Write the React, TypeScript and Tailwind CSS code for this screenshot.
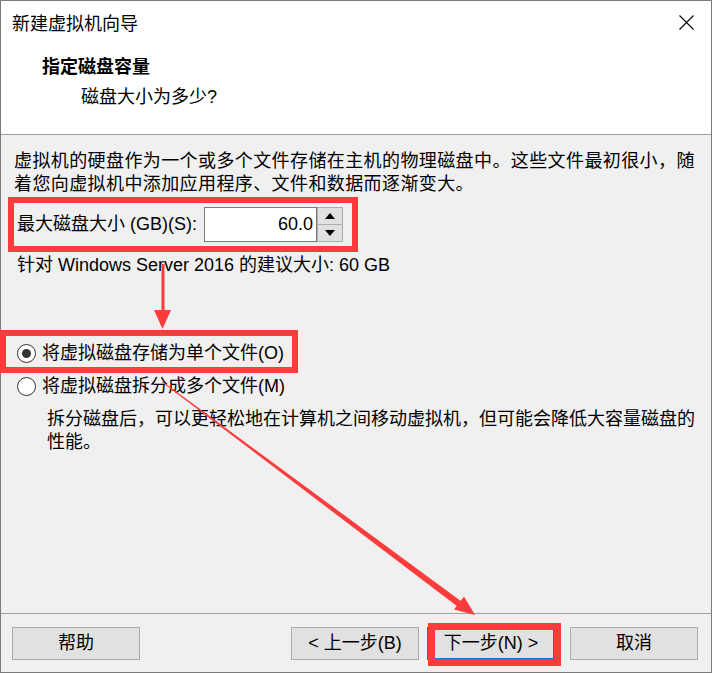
import React from 'react';

const CJK = { fontFamily: '"Liberation Sans", "Noto Sans CJK SC", sans-serif' };

const Radio: React.FC<{ checked?: boolean; label: string }> = ({ checked, label }) => (
  <div className="flex items-center h-[23px] pl-[3px]">
    <span className="w-[19px] h-[19px] rounded-full border border-[#333333] bg-white flex items-center justify-center">
      {checked && <span className="w-[9px] h-[9px] rounded-full bg-[#333333]" />}
    </span>
    <span className="ml-[6px] whitespace-nowrap">{label}</span>
  </div>
);

const WizButton: React.FC<{ label: string; focused?: boolean; className?: string }> = ({ label, focused, className }) => (
  <button
    className={
      'w-[128px] h-[33px] bg-[#e1e1e1] text-[18px] text-black flex items-center justify-center ' +
      (focused ? 'border-2 border-[#0078d7] ' : 'border border-[#adadad] ') +
      (className ?? '')
    }
  >
    {label}
  </button>
);

export default function App() {
  return (
    <div className="relative w-[712px] h-[673px] text-black text-[18px]" style={CJK}>
      <div className="w-full h-full border border-[#7a7a7a] bg-[#f0f0f0] flex flex-col">
        {/* title + header */}
        <div className="h-[134px] bg-white border-b border-[#a0a0a0] shrink-0">
          <div className="h-[46px] flex items-center justify-between pl-[11px] pr-[17px]">
            <span className="leading-[23px]">新建虚拟机向导</span>
            <svg width="15" height="15" viewBox="0 0 15 15" className="mb-[4px]">
              <path d="M0.5 0.5 L14.5 14.5 M14.5 0.5 L0.5 14.5" stroke="#000" strokeWidth="1.1" fill="none" />
            </svg>
          </div>
          <div className="pl-[41px] mt-[9px] leading-[23px] font-bold">指定磁盘容量</div>
          <div className="pl-[80px] mt-[7px] leading-[23px]">磁盘大小为多少?</div>
        </div>

        {/* body */}
        <div className="flex-1 pl-[13px] pt-[15px] leading-[23px]">
          <p className="tracking-[0.4px] whitespace-nowrap">
            虚拟机的硬盘作为一个或多个文件存储在主机的物理磁盘中。这些文件最初很小，随
            <br />
            着您向虚拟机中添加应用程序、文件和数据而逐渐变大。
          </p>

          <div className="mt-[11px] pl-[3px] flex items-center h-[35px]">
            <span className="w-[187px] whitespace-nowrap">最大磁盘大小 (GB)(S):</span>
            <div className="w-[113px] h-[35px] bg-white border border-[#7a7a7a] flex items-center justify-end pr-[3px]">
              60.0
            </div>
            <div className="w-[26px] h-[35px] flex flex-col">
              <div className="h-[18px] bg-[#e1e1e1] border border-[#adadad] flex items-center justify-center">
                <svg width="10" height="6" viewBox="0 0 10 6"><path d="M5 0 L10 6 L0 6 Z" fill="#000" /></svg>
              </div>
              <div className="h-[17px] bg-[#e1e1e1] border border-t-0 border-[#adadad] flex items-center justify-center">
                <svg width="10" height="6" viewBox="0 0 10 6"><path d="M0 0 L10 0 L5 6 Z" fill="#000" /></svg>
              </div>
            </div>
          </div>

          <p className="mt-[12px] pl-[3px] whitespace-nowrap">针对 Windows Server 2016 的建议大小: 60 GB</p>

          <div className="mt-[65px]">
            <Radio checked label="将虚拟磁盘存储为单个文件(O)" />
          </div>
          <div className="mt-[10px]">
            <Radio label="将虚拟磁盘拆分成多个文件(M)" />
          </div>
          <p className="mt-[10px] pl-[33px] whitespace-nowrap">
            拆分磁盘后，可以更轻松地在计算机之间移动虚拟机，但可能会降低大容量磁盘的
            <br />
            性能。
          </p>
        </div>

        {/* footer */}
        <div className="h-[59px] shrink-0 border-t border-[#a0a0a0] pt-[13px] pl-[11px] pr-[13px] flex items-start">
          <WizButton label="帮助" />
          <div className="flex-1" />
          <WizButton label="< 上一步(B)" />
          <WizButton label="下一步(N) >" focused className="ml-[8px]" />
          <WizButton label="取消" className="ml-[15px]" />
        </div>
      </div>

      {/* annotations */}
      <div className="absolute left-[8px] top-[197px] w-[350px] h-[55px] border-[6px] border-[#fa3c3c] pointer-events-none" />
      <div className="absolute left-0 top-[330px] w-[298px] h-[43px] border-[6px] border-[#fa3c3c] pointer-events-none" />
      <div className="absolute left-[428px] top-[623px] w-[133px] h-[43px] border-[7px] border-[#fa3c3c] pointer-events-none" />
      <svg className="absolute left-0 top-0 pointer-events-none" width="712" height="673" viewBox="0 0 712 673">
        <path d="M161.5 264 L164.5 264 L164.5 311 L161.5 311 Z" fill="#fa3c3c" />
        <path d="M154 310 L171 310 L162.5 329 Z" fill="#fa3c3c" />
        <path d="M162 382.3 L163 381.7 L461.5 601.5 L457.5 606.5 Z" fill="#fa3c3c" />
        <path d="M475 615 L454 609.5 L464 596.5 Z" fill="#fa3c3c" />
      </svg>
    </div>
  );
}
